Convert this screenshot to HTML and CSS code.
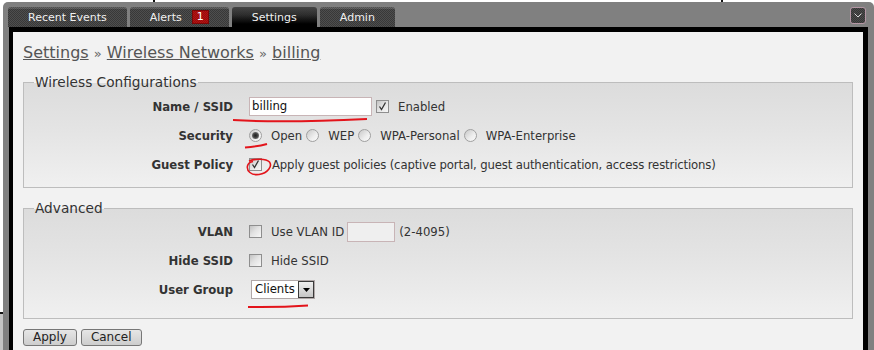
FILE: index.html
```html
<!DOCTYPE html>
<html>
<head>
<meta charset="utf-8">
<title>Settings » Wireless Networks » billing</title>
<link rel="stylesheet" href="styles.css">
</head>
<body>
<div class="desk">
  <span class="bit bit-a"></span>
  <span class="bit bit-b"></span>
  <span class="bit bit-c"></span>
  <span class="bit bit-d"></span>
</div>
<div class="window">
  <div class="tabbar">
    <div class="tabs">
      <div class="tab">Recent Events</div>
      <div class="tab">Alerts <span class="badge">1</span></div>
      <div class="tab active">Settings</div>
      <div class="tab">Admin</div>
    </div>
    <div class="collapse">
      <svg width="8" height="5" viewBox="0 0 8 5"><polyline points="0.5,0.5 4,4 7.5,0.5" fill="none" stroke="#d8d8d8" stroke-width="1"/></svg>
    </div>
  </div>
  <div class="panel">
    <h1 class="crumbs"><a href="#">Settings</a> <span class="sep">»</span> <a href="#">Wireless Networks</a> <span class="sep">»</span> <a href="#">billing</a></h1>

    <fieldset class="group">
      <legend>Wireless Configurations</legend>
      <div class="form-grid">
        <div class="lbl">Name / SSID</div>
        <div class="ctl">
          <span class="text-input name-input">billing</span>
          <span class="cb checked"><svg width="11" height="11" viewBox="0 0 11 11"><path d="M2.5 5.5 L4.5 8.5 L8.5 1.5" fill="none" stroke="#333" stroke-width="1.3"/></svg></span>
          <span class="opt">Enabled</span>
        </div>

        <div class="lbl">Security</div>
        <div class="ctl">
          <span class="rd on"></span><span class="opt">Open</span>
          <span class="rd"></span><span class="opt">WEP</span>
          <span class="rd"></span><span class="opt">WPA-Personal</span>
          <span class="rd"></span><span class="opt">WPA-Enterprise</span>
        </div>

        <div class="lbl">Guest Policy</div>
        <div class="ctl">
          <span class="cb checked"><svg width="11" height="11" viewBox="0 0 11 11"><path d="M2.5 5.5 L4.5 8.5 L8.5 1.5" fill="none" stroke="#333" stroke-width="1.3"/></svg></span>
          <span class="opt long">Apply guest policies (captive portal, guest authentication, access restrictions)</span>
        </div>
      </div>
    </fieldset>

    <fieldset class="group adv">
      <legend>Advanced</legend>
      <div class="form-grid">
        <div class="lbl">VLAN</div>
        <div class="ctl">
          <span class="cb"></span>
          <span class="opt tight">Use VLAN ID</span>
          <span class="text-input vlan-input"></span>
          <span class="opt">(2-4095)</span>
        </div>

        <div class="lbl">Hide SSID</div>
        <div class="ctl">
          <span class="cb"></span>
          <span class="opt">Hide SSID</span>
        </div>

        <div class="lbl">User Group</div>
        <div class="ctl">
          <span class="select"><span class="select-val">Clients</span><span class="select-btn"><svg width="7" height="4" viewBox="0 0 7 4"><polygon points="0,0 7,0 3.5,4" fill="#000"/></svg></span></span>
        </div>
      </div>
    </fieldset>

    <div class="actions">
      <button class="btn">Apply</button>
      <button class="btn">Cancel</button>
    </div>
  </div>
</div>

<svg class="marks" width="874" height="350" viewBox="0 0 874 350">
  <path d="M233 120 Q283 123 367 119" fill="none" stroke="#e3141b" stroke-width="2"/>
  <path d="M245 147.5 Q258 146.5 267 144" fill="none" stroke="#e3141b" stroke-width="2"/>
  <path d="M249 161 C255 158.5 266 158.5 269.5 162 C272.5 166 268 173 259 174.5 C251 175.5 246.5 171 247.5 166 C248 163.5 250 162 253 161.5" fill="none" stroke="#e3141b" stroke-width="1.6"/>
  <path d="M248 307 Q280 307.5 308 305.5" fill="none" stroke="#e3141b" stroke-width="2"/>
</svg>
</body>
</html>
```

FILE: styles.css
```css
html, body {
  margin: 0;
  padding: 0;
}

body {
  position: relative;
  width: 874px;
  height: 350px;
  overflow: hidden;
  background: #ffffff;
  font-family: "DejaVu Sans", Verdana, sans-serif;
}

/* background desktop fragments */
.desk .bit {
  position: absolute;
  display: block;
}
.bit-a { left: 153px; top: 0; width: 2px; height: 2px; background: #111; }
.bit-b { left: 721px; top: 0; width: 2px; height: 3px; background: #111; }
.bit-c { left: 0; top: 312px; width: 3px; height: 2px; background: #111; }
.bit-d { left: 0; top: 314px; width: 3px; height: 36px; background: #c4c4c4; }

.window {
  position: relative;
  margin: 2px 0 0 3px;
  width: 871px;
  height: 348px;
  background: #808080;
  border-radius: 5px 5px 0 0;
}

.tabbar {
  display: flex;
  justify-content: space-between;
  align-items: flex-start;
  height: 25px;
  box-sizing: border-box;
  padding: 5px 8px 0 5px;
}

.tabs {
  display: flex;
  gap: 3px;
}

.tab {
  display: flex;
  align-items: center;
  gap: 10px;
  height: 20px;
  padding: 0 20px;
  font-size: 11px;
  color: #f0f0f0;
  border-radius: 3px 3px 0 0;
  background:
    linear-gradient(to bottom, rgba(255,255,255,0.12) 0, rgba(255,255,255,0.12) 2px, transparent 2px),
    repeating-conic-gradient(#383838 0 25%, #4e4e4e 0 50%) 0 0 / 2px 2px;
}

.tab.active {
  background:
    linear-gradient(to bottom, rgba(70,70,70,0.9) 0%, rgba(40,40,40,0.85) 40%, #000 85%, #000 100%),
    repeating-conic-gradient(#3c3c3c 0 25%, #525252 0 50%) 0 0 / 2px 2px;
}

.badge {
  display: inline-block;
  width: 17px;
  height: 14px;
  line-height: 14px;
  text-align: center;
  font-size: 11px;
  color: #fff;
  background: repeating-conic-gradient(#9c0a0a 0 25%, #b01414 0 50%) 0 0 / 2px 2px;
  box-shadow: inset 0 0 0 1px #7c0606;
}

.collapse {
  display: flex;
  align-items: center;
  justify-content: center;
  width: 16px;
  height: 17px;
  box-sizing: border-box;
  border: 1px solid #b496a4;
  border-radius: 3px;
  background: repeating-conic-gradient(#363636 0 25%, #4a4a4a 0 50%) 0 0 / 2px 2px;
}

.panel {
  margin: 0 6px;
  height: 323px;
  box-sizing: border-box;
  padding: 0 10px;
  background: #f2f2f2;
  border-style: solid;
  border-color: #000;
  border-width: 5px 5px 0 4px;
}

.crumbs {
  margin: 11px 0 11px;
  height: 19px;
  font-size: 16px;
  line-height: 19px;
  font-weight: normal;
  color: #555;
}

.crumbs a {
  color: #555;
  text-decoration: underline;
}

.crumbs .sep {
  font-size: 13px;
  line-height: 0;
  color: #666;
}

.group {
  margin: 0;
  min-width: 0;
  padding: 1px 10px 8px;
  border: 1px solid #bdbdbd;
  background: linear-gradient(to bottom, #dcdcdc 0%, #e4e4e4 45%, #f0f0f0 100%);
}

.group + .group {
  margin-top: 11px;
}

.group.adv {
  padding-top: 0;
  padding-bottom: 14px;
}

.group legend {
  padding: 0 1px;
  font-size: 13.7px;
  line-height: 18px;
  color: #333;
}

.form-grid {
  display: grid;
  grid-template-columns: 199px 1fr;
  grid-auto-rows: 29px;
  column-gap: 16px;
  align-items: center;
}

.lbl {
  text-align: right;
  font-weight: bold;
  font-size: 11.7px;
  color: #333;
}

.ctl {
  display: flex;
  align-items: center;
  font-size: 11.7px;
  color: #333;
}

.opt {
  margin-right: 4px;
  white-space: nowrap;
}

.opt.tight {
  margin-right: 3px;
}

.opt.long {
  margin-left: 1px;
  letter-spacing: -0.15px;
}

.text-input {
  box-sizing: border-box;
  display: inline-block;
  border: 1px solid #c8b4b6;
  font-size: 11.7px;
  color: #111;
}

.name-input {
  width: 123px;
  height: 19px;
  line-height: 17px;
  padding-left: 2px;
  background: #fff;
  margin-right: 4px;
}

.vlan-input {
  width: 48px;
  height: 20px;
  background: #efefef;
  margin-right: 4px;
}

.cb {
  display: inline-flex;
  align-items: center;
  justify-content: center;
  flex: none;
  width: 13px;
  height: 13px;
  box-sizing: border-box;
  margin-right: 9px;
  border: 1px solid #8e8e8e;
  background: linear-gradient(135deg, #c2c2c2 0%, #e2e2e2 45%, #f7f7f7 100%);
}

.rd {
  display: inline-block;
  position: relative;
  flex: none;
  width: 13px;
  height: 13px;
  box-sizing: border-box;
  margin-right: 9px;
  border: 1px solid #a0a0a0;
  border-radius: 50%;
  background: linear-gradient(135deg, #c8c8c8 0%, #eeeeee 60%, #fafafa 100%);
}

.rd.on::after {
  content: "";
  position: absolute;
  left: 2px;
  top: 2px;
  width: 7px;
  height: 7px;
  border-radius: 50%;
  background: radial-gradient(circle, #222 0, #3a3a3a 35%, #777 75%, #999 100%);
}

.select {
  display: inline-flex;
  align-items: stretch;
  margin-left: 2px;
  width: 64px;
  height: 19px;
  box-sizing: border-box;
  border: 1px solid #b0a8a8;
  background: #fff;
}

.select-val {
  flex: 1;
  padding-left: 3px;
  line-height: 17px;
  font-size: 11.7px;
  color: #111;
}

.select-btn {
  display: flex;
  align-items: center;
  justify-content: center;
  width: 16px;
  box-sizing: border-box;
  border: 1px solid #3a3a3a;
  background: linear-gradient(to bottom, #eeeeee, #c6c6c6);
}

.actions {
  display: flex;
  gap: 4px;
  margin-top: 10px;
}

.btn {
  height: 17px;
  box-sizing: border-box;
  margin: 0;
  padding: 0 9px;
  border: 1px solid #777;
  border-radius: 3px;
  background: linear-gradient(to bottom, #e6e6e6, #cdcdcd);
  font-family: "DejaVu Sans", Verdana, sans-serif;
  font-size: 12px;
  line-height: 15px;
  color: #222;
}

.marks {
  position: absolute;
  left: 0;
  top: 0;
  pointer-events: none;
}
```
